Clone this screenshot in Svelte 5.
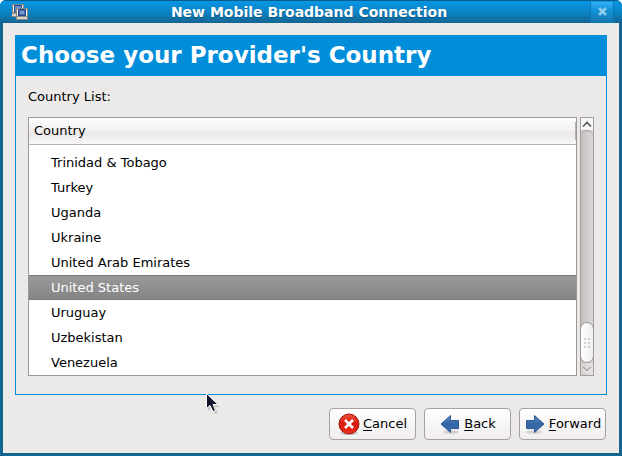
<script>
    const countries = [
        'Trinidad & Tobago',
        'Turkey',
        'Uganda',
        'Ukraine',
        'United Arab Emirates',
        'United States',
        'Uruguay',
        'Uzbekistan',
        'Venezuela'
    ];

    let selected = $state(5);

    function move(step) {
        selected = Math.min(countries.length - 1, Math.max(0, selected + step));
    }
</script>

<div class="window">
    <header class="titlebar">
        <svg class="app-icon" width="16" height="16" viewBox="0 0 16 16" shape-rendering="crispEdges" aria-hidden="true">
            <path fill="#8a8984" d="M0 0h12v9H0zM0 9h5v4H0z" />
            <path fill="#f4f3ee" d="M1 1h10v7H1z" />
            <path fill="#24468a" d="M2 1h8v7H2z" />
            <path fill="#6e91c8" d="M3 2h6v5H3z" />
            <path fill="#d8d6d0" d="M0 10h4v2H0z" />
            <path fill="#8a8984" d="M4 4h12v9H4z" />
            <path fill="#f4f3ee" d="M5 5h10v7H5z" />
            <path fill="#24468a" d="M6 5h8v7H6z" />
            <path fill="#4b70af" d="M7 6h6v5H7z" />
            <path fill="#7898ca" d="M8 7h4v3H8z" />
            <path fill="#8a8984" d="M4 13h12v3H4z" />
            <path fill="#d8d6d0" d="M5 13h10v2H5z" />
        </svg>
        <h1>New Mobile Broadband Connection</h1>
        <button class="close" aria-label="Close">
            <svg width="11" height="11" viewBox="0 0 11 11" aria-hidden="true">
                <path d="M2 2l7 7M9 2l-7 7" stroke="#7fc3ea" stroke-width="3" />
                <path d="M3 3l5 5M8 3l-5 5" stroke="#a9d6ef" stroke-width="1" />
            </svg>
        </button>
    </header>

    <main>
        <section class="page">
            <h2>Choose your Provider's Country</h2>
            <div class="content">
                <p id="list-label">Country List:</p>
                <div class="list-row">
                    <div class="list">
                        <table aria-labelledby="list-label">
                            <thead>
                                <tr><th scope="col"><span>Country</span></th></tr>
                            </thead>
                            <tbody>
                                {#each countries as country, i}
                                    <tr class:selected={i === selected}>
                                        <td>
                                            <button aria-pressed={i === selected} onclick={() => (selected = i)}>{country}</button>
                                        </td>
                                    </tr>
                                {/each}
                            </tbody>
                        </table>
                    </div>
                    <div class="scrollbar">
                        <button class="up" aria-label="Scroll up" onclick={() => move(-1)}>
                            <svg width="12" height="12" viewBox="0 0 12 12" aria-hidden="true">
                                <path d="M2 8.500l4-4 4 4" fill="none" stroke="#555" stroke-width="1.600" />
                            </svg>
                        </button>
                        <div class="trough">
                            <div class="thumb">
                                <svg width="6" height="10" viewBox="0 0 6 10" fill="#d0cdcd" shape-rendering="crispEdges" aria-hidden="true">
                                    <path d="M0 0h2v2H0zM4 0h2v2H4zM0 4h2v2H0zM4 4h2v2H4zM0 8h2v2H0zM4 8h2v2H4z" />
                                </svg>
                            </div>
                        </div>
                        <button class="down" aria-label="Scroll down" onclick={() => move(1)}>
                            <svg width="12" height="12" viewBox="0 0 12 12" aria-hidden="true">
                                <path d="M2 5l4 4 4-4" fill="none" stroke="#fff" stroke-width="1.500" />
                                <path d="M2 4l4 4 4-4" fill="none" stroke="#aaa6a6" stroke-width="1.500" />
                            </svg>
                        </button>
                    </div>
                </div>
            </div>
        </section>

        <footer>
            <button class="action">
                <svg width="22" height="22" viewBox="0 0 22 22" aria-hidden="true">
                    <defs>
                        <linearGradient id="red" x1="0" y1="0" x2="0" y2="1">
                            <stop offset="0" stop-color="#f0503c" />
                            <stop offset="0.500" stop-color="#d8180f" />
                            <stop offset="1" stop-color="#e8321e" />
                        </linearGradient>
                    </defs>
                    <ellipse cx="11" cy="20" rx="9" ry="2" fill="#000" opacity="0.15" />
                    <circle cx="11" cy="11" r="10" fill="url(#red)" stroke="#a8120e" />
                    <path d="M7 7l8 8M15 7l-8 8" stroke="#fff" stroke-width="2.600" />
                </svg>
                <span><u>C</u>ancel</span>
            </button>
            <button class="action">
                <svg width="22" height="22" viewBox="0 0 22 22" aria-hidden="true">
                    <defs>
                        <linearGradient id="blue" x1="0" y1="0" x2="0" y2="1">
                            <stop offset="0" stop-color="#5a8cc8" />
                            <stop offset="0.500" stop-color="#3465a4" />
                            <stop offset="1" stop-color="#3f74b5" />
                        </linearGradient>
                    </defs>
                    <ellipse cx="12" cy="19" rx="8" ry="2" fill="#000" opacity="0.12" />
                    <path d="M19.500 7.500h-8v-5L2 11l9.500 8.500v-4h8z" fill="url(#blue)" stroke="#2d5a94" />
                </svg>
                <span><u>B</u>ack</span>
            </button>
            <button class="action">
                <svg width="22" height="22" viewBox="0 0 22 22" aria-hidden="true">
                    <ellipse cx="10" cy="19" rx="8" ry="2" fill="#000" opacity="0.12" />
                    <path d="M2.500 7.500h8v-5L20 11l-9.500 8.500v-4h-8z" fill="url(#blue)" stroke="#2d5a94" />
                </svg>
                <span><u>F</u>orward</span>
            </button>
        </footer>
    </main>

    <svg class="pointer" width="14" height="22" viewBox="0 0 14 22" aria-hidden="true">
        <path d="M2 2v16l4-3 3 6 3-1-3-6h5z" fill="#000" opacity="0.15" />
        <path d="M0.500 0.500v15l3.500-3 3 6 2.500-1-2.500-6h5z" fill="#10132c" stroke="#fff" />
    </svg>
</div>

<style>
    :global(body) {
        margin: 0;
        background: #fff;
    }
    .window {
        position: relative;
        box-sizing: border-box;
        padding: 0 3px 3px;
        border-radius: 6px 6px 0 0;
        background: #13648f;
        color: #000;
        font: 13px/16px "DejaVu Sans", sans-serif;
        overflow: hidden;
    }
    button {
        font: inherit;
        color: inherit;
    }
    svg {
        display: block;
        flex: none;
    }
    .titlebar {
        display: flex;
        align-items: center;
        box-sizing: border-box;
        height: 23px;
        margin: 0 -3px;
        padding: 0 8px 0 12px;
        border-top: 1px solid #0b5c8a;
        background: linear-gradient(#0596e6, #0a84c6 50%, #146592);
    }
    h1 {
        flex: 1;
        margin: 0;
        color: #fff;
        font-size: 14px;
        line-height: 20px;
        text-align: center;
        text-shadow: 0 1px 1px #0b5580;
    }
    .close {
        display: flex;
        align-items: center;
        justify-content: center;
        width: 24px;
        height: 21px;
        padding: 0;
        border: 1px solid #0a76b4;
        border-width: 0 1px 1px;
        background: linear-gradient(#35aef5, #1292d8 40%, #1878ae);
    }
    main {
        padding: 12px 12px 13px;
        background: #ebeae8;
    }
    .page {
        border: 1px solid #008dd9;
    }
    h2 {
        margin: 0;
        padding: 4px 5px 6px;
        background: #008dd9;
        color: #fff;
        font-size: 23px;
        line-height: 30px;
    }
    .content {
        padding: 13px 12px 18px;
    }
    p {
        margin: 0 0 12px;
    }
    .list-row {
        display: flex;
        gap: 3px;
    }
    .list {
        flex: 1;
        border: 1px solid #9d9796;
        background: #fff;
    }
    table {
        width: 100%;
        border-collapse: separate;
        border-spacing: 0;
    }
    th {
        padding: 4px 0;
        border-bottom: 1px solid #b9b2b1;
        background: linear-gradient(#fdfdfd, #f3f1f1 45%, #ebe8e8 60%, #f8f7f7);
        font-weight: normal;
        text-align: left;
    }
    th span {
        display: block;
        padding: 1px 5px;
        border-right: 1px solid #b9b2b1;
    }
    tbody::before {
        content: "";
        display: block;
        height: 5px;
    }
    td {
        padding: 0;
    }
    td button {
        display: block;
        box-sizing: border-box;
        width: 100%;
        height: 25px;
        padding: 0 22px;
        border: 0;
        background: none;
        text-align: left;
    }
    .selected button {
        border: solid #7a7a7a;
        border-width: 1px 0;
        background: linear-gradient(#999, #858585);
        color: #fff;
    }
    .scrollbar {
        display: flex;
        flex-direction: column;
        box-sizing: border-box;
        width: 14px;
        border: 1px solid #a39d9c;
        background: linear-gradient(90deg, #c7c1c1, #d9d6d6);
    }
    .up,
    .down {
        height: 12px;
        padding: 0;
        border: 0;
    }
    .up {
        background: #f7f6f6;
    }
    .down {
        background: linear-gradient(90deg, #d4d1d0, #e6e4e4);
    }
    .trough {
        display: flex;
        flex: 1;
        flex-direction: column;
        justify-content: flex-end;
        border-top: 1px solid #a39d9c;
        border-radius: 6px 6px 0 0;
    }
    .thumb {
        display: flex;
        align-items: center;
        justify-content: center;
        box-sizing: border-box;
        height: 41px;
        margin: 0 -1px;
        border: 1px solid #9d9796;
        border-radius: 7px;
        background: linear-gradient(90deg, #fff, #f0efef);
    }
    footer {
        display: flex;
        justify-content: flex-end;
        gap: 8px;
        padding: 13px 1px 0 0;
    }
    .action {
        display: flex;
        align-items: center;
        justify-content: center;
        box-sizing: border-box;
        width: 87px;
        height: 32px;
        padding: 0 0 1px;
        gap: 3px;
        border: 1px solid #a6a1a0;
        border-radius: 4px;
        background: linear-gradient(#fff, #f7f6f6 50%, #efeded);
    }
    u {
        text-underline-offset: 2px;
    }
    .pointer {
        position: absolute;
        left: 206px;
        top: 393px;
        pointer-events: none;
    }
</style>
